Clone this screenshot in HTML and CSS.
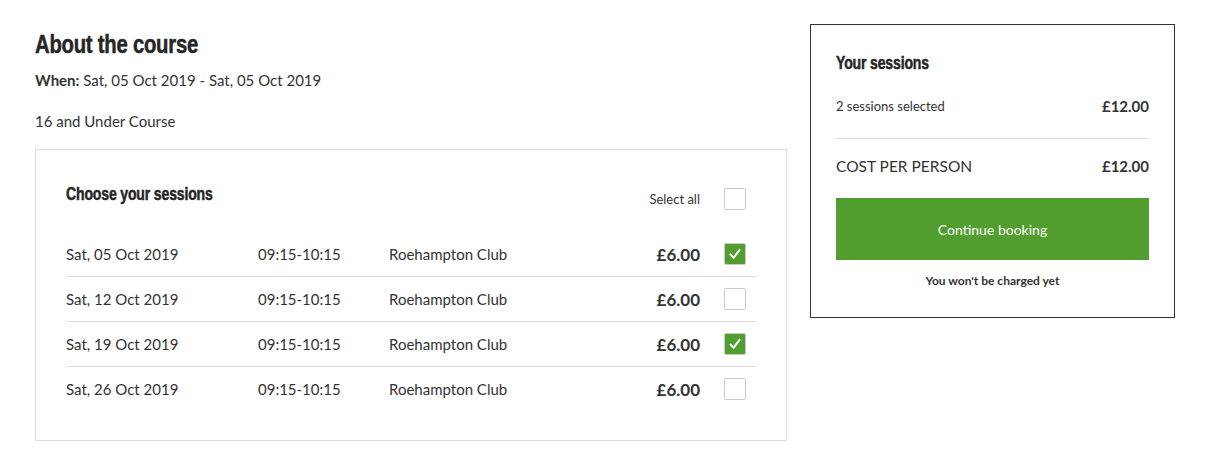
FILE: index.html
```html
<!DOCTYPE html>
<html>
<head>
<meta charset="utf-8">
<link rel="stylesheet" href="styles.css">
</head>
<body>
<div class="page">
  <main class="course">
    <h1 class="title"><span class="cond">About the course</span></h1>
    <p class="when"><strong>When:</strong> Sat, 05 Oct 2019 - Sat, 05 Oct 2019</p>
    <p class="desc">16 and Under Course</p>
    <section class="sessions">
      <div class="sessions-head">
        <h2 class="sub"><span class="cond">Choose your sessions</span></h2>
        <div class="select-all">
          <span>Select all</span>
          <span class="box"></span>
        </div>
      </div>
      <div class="row">
        <span>Sat, 05 Oct 2019</span><span>09:15-10:15</span><span>Roehampton Club</span><span class="price">£6.00</span>
        <span class="box checked"><svg viewBox="0 0 22 22" width="22" height="22"><path d="M6.5 11.5 L9.6 14.8 L15.5 6.8" fill="none" stroke="#fff" stroke-width="2" stroke-linecap="round" stroke-linejoin="round"/></svg></span>
      </div>
      <div class="row">
        <span>Sat, 12 Oct 2019</span><span>09:15-10:15</span><span>Roehampton Club</span><span class="price">£6.00</span>
        <span class="box"></span>
      </div>
      <div class="row">
        <span>Sat, 19 Oct 2019</span><span>09:15-10:15</span><span>Roehampton Club</span><span class="price">£6.00</span>
        <span class="box checked"><svg viewBox="0 0 22 22" width="22" height="22"><path d="M6.5 11.5 L9.6 14.8 L15.5 6.8" fill="none" stroke="#fff" stroke-width="2" stroke-linecap="round" stroke-linejoin="round"/></svg></span>
      </div>
      <div class="row">
        <span>Sat, 26 Oct 2019</span><span>09:15-10:15</span><span>Roehampton Club</span><span class="price">£6.00</span>
        <span class="box"></span>
      </div>
    </section>
  </main>
  <aside class="summary">
    <h2 class="sub"><span class="cond">Your sessions</span></h2>
    <div class="line small">
      <span>2 sessions selected</span><strong>£12.00</strong>
    </div>
    <div class="line total">
      <span>COST PER PERSON</span><strong>£12.00</strong>
    </div>
    <button class="cta">Continue booking</button>
    <p class="note">You won't be charged yet</p>
  </aside>
</div>
</body>
</html>
```
FILE: styles.css
```css
* { box-sizing: border-box; }
body {
  margin: 0;
  background: #fff;
  color: #333;
  font-family: Lato, "Noto Sans", sans-serif;
}
.page {
  display: flex;
  align-items: flex-start;
  gap: 23px;
  padding: 24px 0 0 35px;
}
.course { width: 752px; }
.cond {
  display: inline-block;
  transform: scaleX(0.78);
  transform-origin: left center;
  white-space: nowrap;
  -webkit-text-stroke: 0.5px #262626;
}
.title {
  margin: 6px 0 0;
  font-family: "Liberation Sans", Arial, sans-serif;
  font-weight: 700;
  font-size: 26px;
  line-height: 28px;
  color: #262626;
  letter-spacing: -0.3px;
}
.when {
  margin: 12px 0 0;
  font-size: 15px;
  line-height: 20px;
}
.when strong { font-weight: 700; }
.desc {
  margin: 21px 0 0;
  font-size: 15px;
  line-height: 20px;
}
.sessions {
  margin-top: 18px;
  border: 1px solid #ddd;
  padding: 31px 30px 29px 30px;
}
.sessions-head {
  display: flex;
  justify-content: space-between;
  align-items: flex-start;
  margin-bottom: 22px;
  padding-right: 10px;
}
.sub {
  margin: 0;
  font-family: "Liberation Sans", Arial, sans-serif;
  font-weight: 700;
  font-size: 18px;
  line-height: 26px;
  color: #262626;
  letter-spacing: -0.2px;
}
.select-all {
  display: flex;
  align-items: center;
  gap: 24px;
  margin-top: 7px;
  font-size: 13px;
}
.box {
  width: 22px;
  height: 22px;
  border: 1px solid #ccc;
  border-radius: 2px;
  background: #fff;
  display: block;
}
.box.checked {
  background: #519e2f;
  border-color: #c9c9c9;
  position: relative;
}
.box.checked svg {
  position: absolute;
  left: -1px;
  top: -1px;
}
.row {
  display: grid;
  grid-template-columns: 192px 131px 1fr auto 22px;
  align-items: center;
  height: 45px;
  border-bottom: 1px solid #ddd;
  padding-right: 10px;
  font-size: 15px;
}
.row:last-child { border-bottom: none; height: 44px; }
.row .price {
  font-weight: 700;
  font-size: 17px;
  margin-right: 24px;
}
.summary {
  width: 365px;
  border: 1px solid #333;
  padding: 25px 25px 29px;
}
.line {
  display: flex;
  justify-content: space-between;
  align-items: center;
}
.line strong { font-weight: 700; font-size: 15px; }
.line.small {
  font-size: 13px;
  margin-top: 21px;
  padding-bottom: 23px;
  border-bottom: 1px solid #ddd;
}
.line.total {
  font-size: 15.5px;
  margin-top: 18px;
  text-transform: uppercase;
}
.cta {
  display: block;
  width: 100%;
  height: 62px;
  margin-top: 23px;
  border: none;
  background: #519e2f;
  color: #fff;
  font-family: Lato, "Noto Sans", sans-serif;
  font-size: 14px;
}
.note {
  margin: 13px 0 0;
  text-align: center;
  font-size: 12px;
  font-weight: 700;
}
```
